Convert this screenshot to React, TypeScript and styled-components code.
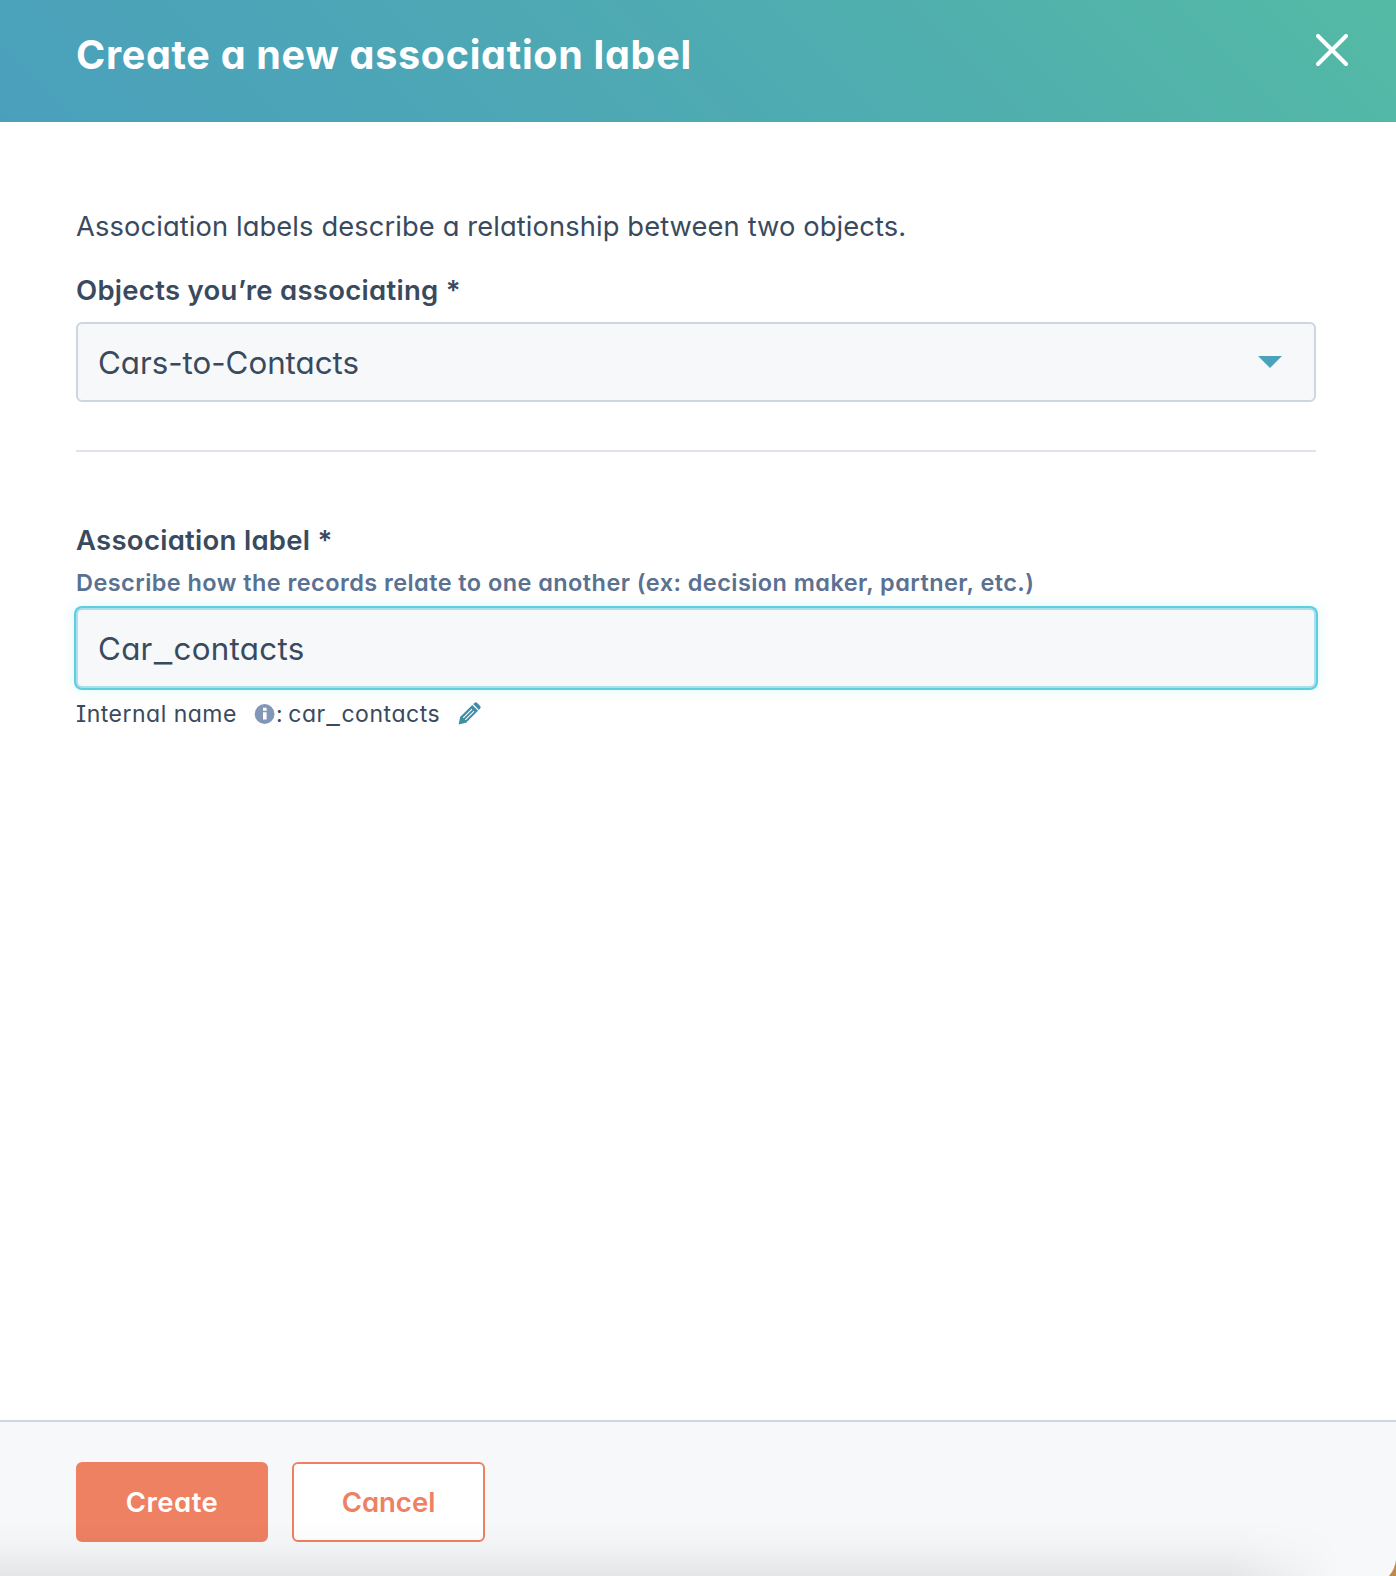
import React from "react";
import styled, { createGlobalStyle } from "styled-components";

const Global = createGlobalStyle`
  * { box-sizing: border-box; }
  body {
    margin: 0;
    background: #fff;
    color: #3a4a5e;
    font-family: Inter, "Open Sans", sans-serif;
    font-weight: 400;
    font-feature-settings: "cv11";
  }
`;

const Panel = styled.div`
  position: relative;
  display: flex;
  flex-direction: column;
  height: 1576px;
  overflow: hidden;
`;

const Header = styled.header`
  display: flex;
  justify-content: space-between;
  align-items: flex-start;
  height: 122px;
  padding: 34px 48px 0 76px;
  background: linear-gradient(45deg, #4aa0bc 0%, #4eaab2 50%, #54baa5 100%);
`;

const Title = styled.h1`
  margin: 1px 0 0;
  color: #fff;
  font-size: 39.5px;
  font-weight: 700;
  line-height: 41px;
  letter-spacing: 0.7px;
`;

const CloseButton = styled.button`
  display: flex;
  padding: 0;
  border: 0;
  background: none;
`;

const Body = styled.main`
  flex: 1;
  display: flex;
  flex-direction: column;
  padding: 85px 80px 0 76px;
`;

const Intro = styled.p`
  margin: 0 0 23px;
  font-size: 27.3px;
  line-height: 40px;
  letter-spacing: 0.11px;
`;

const Label = styled.label`
  font-size: 27.5px;
  font-weight: 600;
  line-height: 40px;
  letter-spacing: 0.28px;
`;

const Help = styled.small`
  margin-top: 8px;
  color: #5a7192;
  font-size: 23.5px;
  font-weight: 600;
  line-height: 30px;
  letter-spacing: 0.43px;
`;

const Field = styled.div<{ $focused?: boolean }>`
  display: flex;
  align-items: center;
  justify-content: space-between;
  height: 80px;
  margin-top: ${(p) => (p.$focused ? 10 : 12)}px;
  padding: 1px 32px 0 20px;
  border: 2px solid ${(p) => (p.$focused ? "#a9e0ec" : "#cdd6e2")};
  border-radius: 6px;
  background: #f6f8fa;
  box-shadow: ${(p) => (p.$focused ? "0 0 0 2px #5fcce0, 0 0 14px 2px rgba(0, 208, 228, 0.14)" : "none")};
  font-size: 31.3px;
  line-height: 40px;
  letter-spacing: ${(p) => (p.$focused ? 0.3 : -0.03)}px;
`;

const Underscore = styled.span`
  display: inline-block;
  margin: 0 0.1em;
  transform: translateY(0.07em) scaleX(1.3);
`;

const Divider = styled.hr`
  width: 100%;
  height: 2px;
  margin: 48px 0 68px;
  border: 0;
  background: #dfe3eb;
`;

const InternalName = styled.div`
  display: flex;
  align-items: center;
  margin-top: 11px;
  font-size: 23px;
  line-height: 30px;
  letter-spacing: 0.5px;
`;

const InternalCaption = styled.span`
  width: 178px;
  font-feature-settings: "cv11", "cv08";
`;

const InternalValue = styled.span`
  width: 182px;
  letter-spacing: 0.55px;
  word-spacing: -2px;
`;

const Footer = styled.footer`
  display: flex;
  gap: 24px;
  height: 156px;
  padding: 40px 76px 0;
  border-top: 2px solid #cdd6e2;
  background: #f6f8fa;
`;

const Button = styled.button<{ $primary?: boolean }>`
  width: ${(p) => (p.$primary ? 192 : 193)}px;
  height: 80px;
  padding: 0;
  border: 2px solid #ee8162;
  border-radius: 6px;
  background: ${(p) => (p.$primary ? "#ee8162" : "#fff")};
  color: ${(p) => (p.$primary ? "#fff" : "#ee8162")};
  font: inherit;
  font-size: 27.5px;
  font-weight: 600;
  letter-spacing: ${(p) => (p.$primary ? 0.5 : 0)}px;
`;

const BottomShade = styled.div`
  position: absolute;
  left: 0;
  right: 0;
  bottom: 0;
  height: 56px;
  background: linear-gradient(to bottom, rgba(0, 0, 0, 0), rgba(0, 0, 0, 0.02) 45%, rgba(0, 0, 0, 0.07));
  mask-image: linear-gradient(to right, #000 88%, transparent 96%);
  pointer-events: none;
`;

const Corner = styled.svg`
  position: absolute;
  right: 0;
  bottom: 0;
`;

const CloseIcon = () => (
  <svg width="32" height="32" viewBox="0 0 32 32">
    <path d="M2 2 30 30M30 2 2 30" stroke="#fff" strokeWidth="4" strokeLinecap="round" />
  </svg>
);

const CaretSvg = styled.svg`
  margin-top: -2px;
`;

const Caret = () => (
  <CaretSvg width="24" height="12" viewBox="0 0 24 12">
    <path d="M0 0H24L12 12Z" fill="#4aa2bc" />
  </CaretSvg>
);

const InfoIcon = () => (
  <svg width="22" height="22" viewBox="0 0 22 22">
    <circle cx="10.6" cy="11" r="9.9" fill="#8297b8" />
    <path d="M9 4.7h3.6v3H9zM9 9.3h3.6v7.1H9z" fill="#fff" />
  </svg>
);

const PencilIcon = () => (
  <svg width="23" height="24" viewBox="0 0 22 23">
    <path
      d="M.6 21.6 2 14.4 13.6 2.9 19.2 8.5 7.7 20Z M14.5 2 15.8.9Q17-.2 18.4.9L21.2 3.8Q22.2 5 21.1 6.3L20.1 7.6Z"
      fill="#3f8ea8"
    />
    <path d="M5 15.2 13.4 6.8M7 17.2 15.4 8.8" stroke="#fff" strokeWidth="1" />
  </svg>
);

export default function App() {
  return (
    <Panel>
      <Global />
      <Header>
        <Title>Create a new association label</Title>
        <CloseButton aria-label="Close">
          <CloseIcon />
        </CloseButton>
      </Header>
      <Body>
        <Intro>Association labels describe a relationship between two objects.</Intro>
        <Label>Objects you’re associating *</Label>
        <Field>
          <span>Cars-to-Contacts</span>
          <Caret />
        </Field>
        <Divider />
        <Label>Association label *</Label>
        <Help>Describe how the records relate to one another (ex: decision maker, partner, etc.)</Help>
        <Field $focused>
          <span>
            Car<Underscore>_</Underscore>contacts
          </span>
        </Field>
        <InternalName>
          <InternalCaption>Internal name</InternalCaption>
          <InfoIcon />
          <InternalValue>
            : car<Underscore>_</Underscore>contacts
          </InternalValue>
          <PencilIcon />
        </InternalName>
      </Body>
      <Footer>
        <Button $primary>Create</Button>
        <Button>Cancel</Button>
      </Footer>
      <BottomShade />
      <Corner width="8" height="16" viewBox="0 0 8 16">
        <path d="M8 0V16H1Q7 9 8 0Z" fill="#c08a45" />
      </Corner>
    </Panel>
  );
}
